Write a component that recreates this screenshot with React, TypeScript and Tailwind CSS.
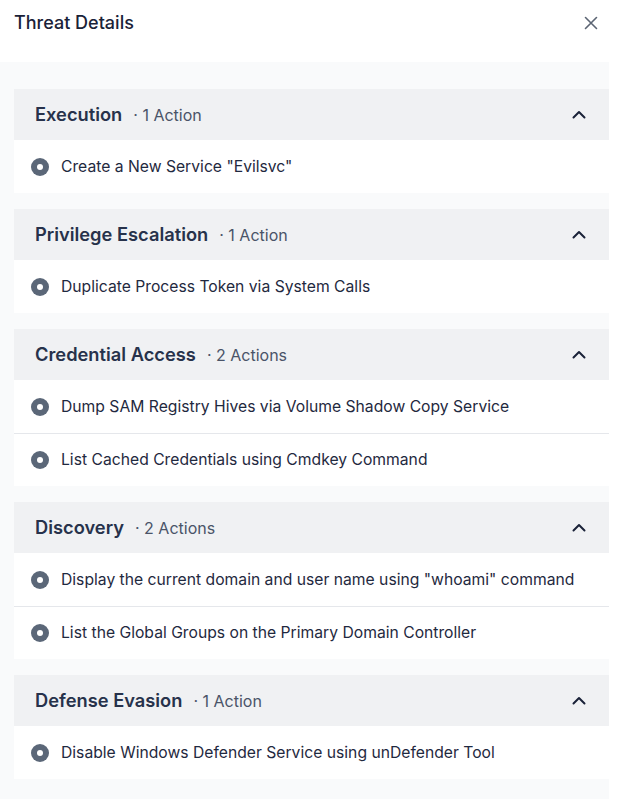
import React from "react";

type Section = { title: string; count: string; items: string[] };

const sections: Section[] = [
  { title: "Execution", count: "· 1 Action", items: ['Create a New Service "Evilsvc"'] },
  { title: "Privilege Escalation", count: "· 1 Action", items: ["Duplicate Process Token via System Calls"] },
  {
    title: "Credential Access",
    count: "· 2 Actions",
    items: ["Dump SAM Registry Hives via Volume Shadow Copy Service", "List Cached Credentials using Cmdkey Command"],
  },
  {
    title: "Discovery",
    count: "· 2 Actions",
    items: [
      'Display the current domain and user name using "whoami" command',
      "List the Global Groups on the Primary Domain Controller",
    ],
  },
  { title: "Defense Evasion", count: "· 1 Action", items: ["Disable Windows Defender Service using unDefender Tool"] },
];

function Dot() {
  return (
    <span className="flex h-[18px] w-[18px] shrink-0 items-center justify-center rounded-full bg-[#5b6778]">
      <span className="h-[6px] w-[6px] rounded-full bg-white" />
    </span>
  );
}

export default function App() {
  return (
    <div className="h-[809px] w-[626px] bg-white font-['Inter',sans-serif]">
      <div className="flex h-[62px] items-start justify-between pl-[14px] pr-[28px] pt-[10px]">
        <h1 className="text-[18px] leading-[26px] font-medium text-[#1a2238]">Threat Details</h1>
        <svg className="mt-[6px]" width="14" height="14" viewBox="0 0 14 14" fill="none" stroke="#5b6473" strokeWidth="1.6" strokeLinecap="round">
          <path d="M1.5 1.5L12.5 12.5M12.5 1.5L1.5 12.5" />
        </svg>
      </div>
      <div className="mr-[17px] flex flex-col gap-[16px] bg-[#f9fafb] pb-[20px] pl-[14px] pt-[27px]">
        {sections.map((s) => (
          <div key={s.title} className="bg-white">
            <div className="flex h-[51px] items-center justify-between bg-[#f0f1f3] pl-[21px] pr-[23px]">
              <div className="flex items-baseline gap-[11px]">
                <span className="text-[18.3px] font-semibold text-[#27324b]">{s.title}</span>
                <span className="text-[16px] text-[#4a5468]">{s.count}</span>
              </div>
              <svg width="14" height="9" viewBox="0 0 14 9" fill="none" stroke="#1a2238" strokeWidth="2" strokeLinecap="round" strokeLinejoin="round">
                <path d="M1.5 7.5L7 2L12.5 7.5" />
              </svg>
            </div>
            {s.items.map((it, i) => (
              <div
                key={it}
                className={`flex h-[53px] items-center gap-[12px] pl-[17px] ${i > 0 ? "border-t border-[#e5e7eb]" : ""}`}
              >
                <Dot />
                <span className="text-[15.7px] text-[#1f2940]">{it}</span>
              </div>
            ))}
          </div>
        ))}
      </div>
    </div>
  );
}
